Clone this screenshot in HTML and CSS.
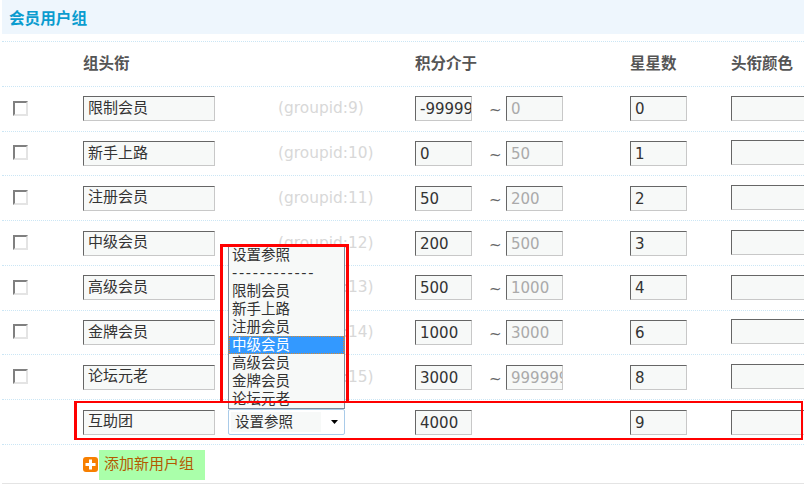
FILE: index.html
```html
<!DOCTYPE html>
<html lang="zh">
<head>
<meta charset="utf-8">
<title>会员用户组</title>
<link rel="stylesheet" href="styles.css">
</head>
<body>
<main class="page">
  <h2 class="band">会员用户组</h2>
  <div class="table">
    <div class="row head">
      <span></span><span>组头衔</span><span></span><span>积分介于</span><span>星星数</span><span>头衔颜色</span>
    </div>
    <div class="row">
      <input class="check" type="checkbox"><input class="field name" value="限制会员"><span class="gid">(groupid:9)</span>
      <div class="range"><input class="field num" value="-99999"><span class="tilde">~</span><input class="field num off" value="0"></div>
      <input class="field num" value="0"><input class="field color">
    </div>
    <div class="row">
      <input class="check" type="checkbox"><input class="field name" value="新手上路"><span class="gid">(groupid:10)</span>
      <div class="range"><input class="field num" value="0"><span class="tilde">~</span><input class="field num off" value="50"></div>
      <input class="field num" value="1"><input class="field color">
    </div>
    <div class="row">
      <input class="check" type="checkbox"><input class="field name" value="注册会员"><span class="gid">(groupid:11)</span>
      <div class="range"><input class="field num" value="50"><span class="tilde">~</span><input class="field num off" value="200"></div>
      <input class="field num" value="2"><input class="field color">
    </div>
    <div class="row">
      <input class="check" type="checkbox"><input class="field name" value="中级会员"><span class="gid">(groupid:12)</span>
      <div class="range"><input class="field num" value="200"><span class="tilde">~</span><input class="field num off" value="500"></div>
      <input class="field num" value="3"><input class="field color">
    </div>
    <div class="row">
      <input class="check" type="checkbox"><input class="field name" value="高级会员"><span class="gid">(groupid:13)</span>
      <div class="range"><input class="field num" value="500"><span class="tilde">~</span><input class="field num off" value="1000"></div>
      <input class="field num" value="4"><input class="field color">
    </div>
    <div class="row">
      <input class="check" type="checkbox"><input class="field name" value="金牌会员"><span class="gid">(groupid:14)</span>
      <div class="range"><input class="field num" value="1000"><span class="tilde">~</span><input class="field num off" value="3000"></div>
      <input class="field num" value="6"><input class="field color">
    </div>
    <div class="row">
      <input class="check" type="checkbox"><input class="field name" value="论坛元老"><span class="gid">(groupid:15)</span>
      <div class="range"><input class="field num" value="3000"><span class="tilde">~</span><input class="field num off" value="999999"></div>
      <input class="field num" value="8"><input class="field color">
    </div>
    <div class="row">
      <span></span><input class="field name" value="互助团">
      <div class="select"><span class="select-text">设置参照</span><svg class="caret" width="7" height="4" viewBox="0 0 7 4"><path d="M0 0h7L3.500 4z"/></svg></div>
      <div class="range"><input class="field num" value="4000"></div>
      <input class="field num" value="9"><input class="field color last">
    </div>
    <div class="row foot">
      <span></span>
      <a class="add"><svg class="plus" width="15" height="15" viewBox="0 0 15 15"><rect width="15" height="15" rx="3" fill="#f77f00"/><path d="M6 2.500h3V6h3.500v3H9v3.500H6V9H2.500V6H6z" fill="#fff"/></svg><span class="add-text">添加新用户组</span></a>
    </div>
  </div>
  <ul class="list">
    <li>设置参照</li>
    <li class="sep">------------</li>
    <li>限制会员</li>
    <li>新手上路</li>
    <li>注册会员</li>
    <li class="sel">中级会员</li>
    <li>高级会员</li>
    <li>金牌会员</li>
    <li>论坛元老</li>
  </ul>
  <div class="mark mark-list"></div>
  <div class="mark mark-row"></div>
</main>
</body>
</html>
```
FILE: styles.css
```css
* { box-sizing: border-box; }
html, body { margin: 0; height: 484px; overflow: hidden; background: #fff; }
body, input { font-family: "DejaVu Sans", "Noto Sans CJK SC", sans-serif; font-size: 15px; color: #333; }
.page { position: relative; width: 804px; height: 484px; overflow: hidden; padding-left: 2px; }
.band { margin: 0 0 7px; height: 34px; padding-left: 7px; background: #eef6fd; color: #0a9ccf; font-size: 15.6px; font-weight: 700; line-height: 38px; }
.table { border-bottom: 1px solid #e4e4e4; height: 443px; }
.row { display: grid; grid-template-columns: 81px 145px 187px 215px 101px 1fr; align-items: start; height: 44.78px; border-top: 1px dotted #cbe6f5; }
.head { color: #555; font-weight: 700; line-height: 44px; font-size: 15.500px; }
.field { display: block; height: 25px; margin: 9.5px 0 0; padding: 1px 0 0 4px; border: 1px solid; border-color: #666 #c8c8c8 #c8c8c8 #666; border-radius: 0; background: #f7f9f8; outline: none; }
.name { width: 132px; padding-top: 0; padding-bottom: 5px; }
.num { width: 57px; }
.off { color: #aaa; }
.color { width: 100px; margin-top: 8.8px; }
.color.last { margin-top: 9.8px; }
.check { appearance: none; display: block; width: 15px; height: 15px; margin: 13.8px 0 0 11px; border: 2px solid; border-color: #808080 #e4e4e4 #e4e4e4 #808080; background: #fff; }
.gid { margin: 9.5px 0 0 50px; line-height: 25px; font-size: 15.4px; color: #d8d8d8; }
.range { display: flex; align-items: flex-start; }
.tilde { width: 34px; margin-top: 9.5px; padding: 0 0 0 17px; line-height: 29px; color: #666; }
.select { display: flex; align-items: center; width: 117px; height: 26px; margin-top: 8.5px; padding: 0 6px 0 2px; border: 1px solid #a9cbe9; border-radius: 2px; background: #fff; }
.select-text { flex: 0 0 90px; height: 20px; padding-left: 4px; background: #f7f9f8; line-height: 20px; font-size: 14.500px; color: #333; }
.caret { margin-left: auto; margin-right: 0; fill: #000; }
.foot { border-top-color: #cbe6f5; }
.add { display: flex; align-items: center; grid-column: 2 / 4; height: 30px; margin-top: 5px; }
.plus { flex: none; margin-left: 0; }
.add-text { height: 30px; margin-left: 1px; padding: 0 11px 0 5px; background: #aaffaa; color: #b35a00; line-height: 29px; }
.list { position: absolute; left: 228px; top: 245px; width: 117px; height: 164px; margin: 0; padding: 1px 0 0; list-style: none; border: 1px solid #7f8a99; border-top: 0; background: #f7f9f8; font-size: 14.5px; line-height: 18px; color: #333; }
.list li { height: 18px; padding-left: 3px; white-space: nowrap; }
.list .sep { height: 18px; line-height: 19px; letter-spacing: 1.7px; overflow: hidden; }
.list .sel { background: #3399ff; color: #fff; outline: 1px dotted #d98a30; outline-offset: -1px; }
.mark { position: absolute; border: solid #f00; }
.mark-list { left: 220px; top: 244px; width: 129px; height: 159px; border-width: 3px 3px 0; }
.mark-row { left: 74px; top: 401px; width: 729px; height: 39px; border-width: 2px 2px 2px 3px; }
```
